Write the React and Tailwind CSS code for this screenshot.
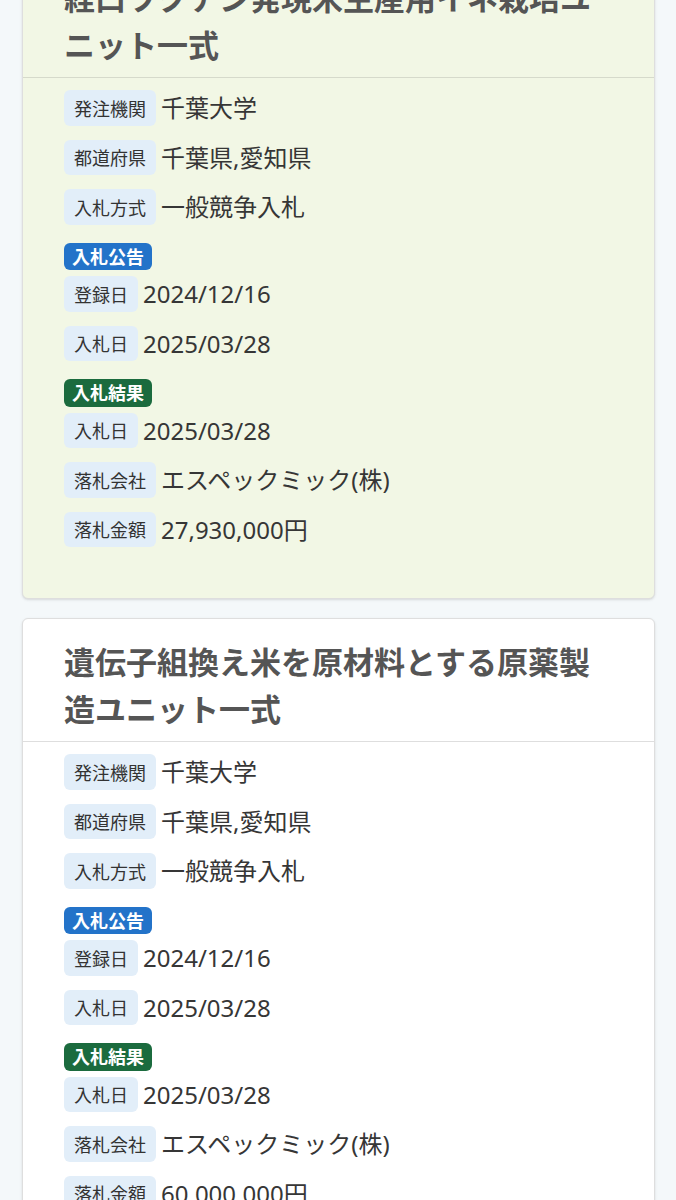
import React from 'react';

const items = [
  {
    title: '経口ワクチン発現米生産用イネ栽培ユニット一式',
    highlight: true,
    org: '千葉大学',
    pref: '千葉県,愛知県',
    method: '一般競争入札',
    registered: '2024/12/16',
    bidDate: '2025/03/28',
    resultDate: '2025/03/28',
    winner: 'エスペックミック(株)',
    amount: '27,930,000円',
  },
  {
    title: '遺伝子組換え米を原材料とする原薬製造ユニット一式',
    highlight: false,
    org: '千葉大学',
    pref: '千葉県,愛知県',
    method: '一般競争入札',
    registered: '2024/12/16',
    bidDate: '2025/03/28',
    resultDate: '2025/03/28',
    winner: 'エスペックミック(株)',
    amount: '60,000,000円',
  },
];

const Row = ({ label, value }) => (
  <div className="flex items-center h-[35.5px] gap-[5px] mb-[14px]">
    <span className="h-[35.5px] px-[10px] pt-[3px] flex items-center rounded-[6px] bg-[#e2eef9] text-[18px] text-[#333]">{label}</span>
    <span className="text-[24px] text-[#363636] leading-[35px]">{value}</span>
  </div>
);

// margins collapse with the row above, so mt is the full gap
const Tag = ({ children, color }) => (
  <div className="flex h-[27.5px] mt-[18px] mb-[6px]">
    <span className={`h-[27.5px] leading-[27px] pt-[1px] px-[8px] rounded-[6px] text-white font-bold text-[18px] ${color}`}>{children}</span>
  </div>
);

const Card = ({ item, first }) => (
  <div className={`${first ? '-mt-[46px]' : ''} mb-[19px] border border-[#dedede] rounded-[6px] shadow-sm ${item.highlight ? 'bg-[#f2f7e5]' : 'bg-white'}`}>
    <h2 className={`pt-[20px] pb-[8px] pl-[41px] pr-[50px] text-[31px] leading-[47px] font-semibold text-[#555] border-b ${item.highlight ? 'border-[#d6dacb]' : 'border-[#dedede]'}`}>
      {item.title}
    </h2>
    <div className="pl-[41px] pr-[20px] pt-[12px] pb-[37px]">
      <Row label="発注機関" value={item.org} />
      <Row label="都道府県" value={item.pref} />
      <Row label="入札方式" value={item.method} />
      <Tag color="bg-[#2373c9]">入札公告</Tag>
      <Row label="登録日" value={item.registered} />
      <Row label="入札日" value={item.bidDate} />
      <Tag color="bg-[#1b6b3e]">入札結果</Tag>
      <Row label="入札日" value={item.resultDate} />
      <Row label="落札会社" value={item.winner} />
      <Row label="落札金額" value={item.amount} />
    </div>
  </div>
);

export default function App() {
  return (
    <div className="min-h-screen bg-[#f4f8fa] pl-[22px] pr-[21px]" style={{ fontFamily: '"Noto Sans", "Noto Sans CJK JP", sans-serif' }}>
      {items.map((item, i) => (
        <Card key={i} item={item} first={i === 0} />
      ))}
    </div>
  );
}
